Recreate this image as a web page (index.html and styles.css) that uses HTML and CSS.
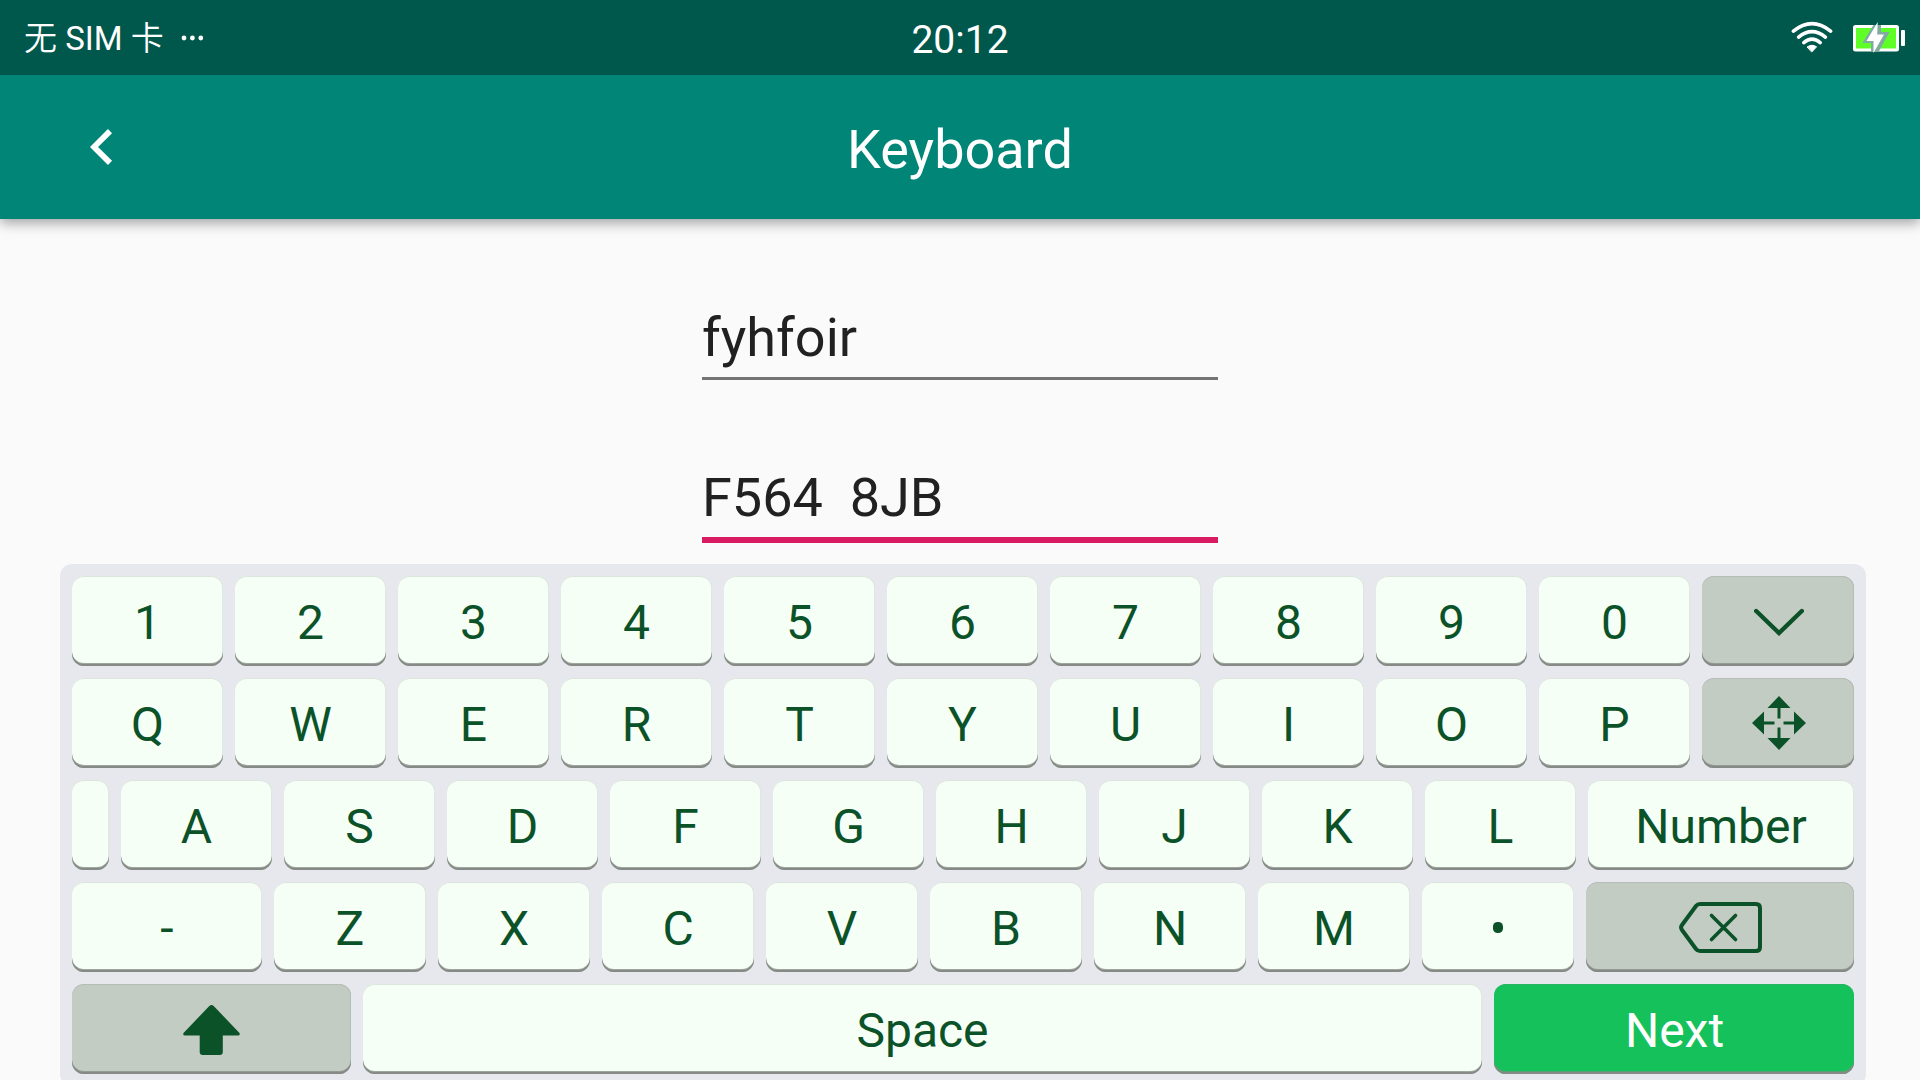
FILE: index.html
```html
<!DOCTYPE html>
<html lang="en">
<head>
<meta charset="utf-8">
<title>Keyboard</title>
<link rel="stylesheet" href="styles.css">
</head>
<body>
<div class="screen">
  <header class="status">
    <div class="carrier"><span class="carrier-name" lang="zh-CN"><span class="han">无</span> SIM <span class="han">卡</span></span>
      <svg class="more" width="24" height="8" viewBox="0 0 24 8" fill="#fff"><circle cx="4" cy="4" r="2.4"/><circle cx="12.4" cy="4" r="2.4"/><circle cx="20.8" cy="4" r="2.4"/></svg>
    </div>
    <div class="clock">20:12</div>
    <div class="indicators">
      <svg width="42" height="33" viewBox="0 0 42 33" fill="none" stroke="#fff" stroke-width="3.6" stroke-linecap="round">
        <path d="M2.4 10.200Q21 -4.800 39.600 10.200"/><path d="M7.600 16.200Q21 5.200 34.400 16.200"/><path d="M12.800 21.600Q21 14.800 29.200 21.600"/>
        <path d="M16.400 25.800Q21 22.600 25.600 25.800L21 30.800Z" fill="#fff" stroke-width="1"/>
      </svg>
      <svg width="53" height="33" viewBox="0 0 53 33">
        <rect x="1.5" y="5.5" width="43" height="23.500" rx="1" fill="#5eff26" stroke="#fff" stroke-width="3"/>
        <rect x="48" y="9" width="4" height="16" rx="1" fill="#fff"/>
        <path d="M20.500 4H28V11H36.500L25.500 31H18V22H9.500Z" fill="#80aaa2"/>
        <path d="M24.700 1L13.500 20H20.500V32L31 13.500H24.200Z" fill="#fff"/>
      </svg>
    </div>
  </header>
  <div class="appbar">
    <svg class="back" width="24" height="38" viewBox="0 0 24 38" fill="none" stroke="#fff" stroke-width="5.8"><path d="M20 3.1L4 19L20 34.9"/></svg>
    <h1 class="title">Keyboard</h1>
  </div>
  <main class="form">
    <div class="field">fyhfoir</div>
    <div class="field field-active">F564  8JB</div>
  </main>
  <section class="keyboard">
    <div class="row row-top">
      <div class="key">1</div><div class="key">2</div><div class="key">3</div><div class="key">4</div><div class="key">5</div><div class="key">6</div><div class="key">7</div><div class="key">8</div><div class="key">9</div><div class="key">0</div>
      <div class="key key-fn"><svg class="icon-hide" width="50" height="28" viewBox="0 0 50 28" fill="none" stroke="#0c5229" stroke-width="4.400" stroke-linecap="round"><path d="M2.200 3L25 25L47.800 3"/></svg></div>
    </div>
    <div class="row row-top">
      <div class="key">Q</div><div class="key">W</div><div class="key">E</div><div class="key">R</div><div class="key">T</div><div class="key">Y</div><div class="key">U</div><div class="key">I</div><div class="key">O</div><div class="key">P</div>
      <div class="key key-fn key-move"><svg class="icon-move" width="54" height="54" viewBox="0 0 54 54" fill="#0c5229"><path d="M27 0L38.500 12H28.500V22.500H25.500V12H15.500Z"/><path d="M27 54L38.500 42H28.500V31.500H25.500V42H15.500Z"/><path d="M0 27L12 15.500V25.500H22.500V28.500H12V38.500Z"/><path d="M54 27L42 15.500V25.500H31.500V28.500H42V38.500Z"/></svg></div>
    </div>
    <div class="row row-home">
      <div class="key"></div><div class="key">A</div><div class="key">S</div><div class="key">D</div><div class="key">F</div><div class="key">G</div><div class="key">H</div><div class="key">J</div><div class="key">K</div><div class="key">L</div><div class="key">Number</div>
    </div>
    <div class="row row-lower">
      <div class="key">-</div><div class="key">Z</div><div class="key">X</div><div class="key">C</div><div class="key">V</div><div class="key">B</div><div class="key">N</div><div class="key">M</div>
      <div class="key"><svg class="icon-dot" width="10" height="11" viewBox="0 0 10 11"><rect width="10" height="11" rx="4.6" fill="#0c5229"/></svg></div>
      <div class="key key-fn"><svg class="icon-delete" width="83" height="51" viewBox="0 0 83 51" fill="none" stroke="#0c5229" stroke-linecap="round" stroke-linejoin="round"><path stroke-width="4" d="M21 2H77Q81 2 81 6V45Q81 49 77 49H21Q18.500 49 17 47L3 28Q1.200 25.500 3 23L17 4Q18.500 2 21 2Z"/><path stroke-width="3.600" d="M32.500 13.500L56.500 37.500M56.500 13.500L32.500 37.500"/></svg></div>
    </div>
    <div class="row row-bottom">
      <div class="key key-fn key-shift"><svg class="icon-shift" width="57" height="50" viewBox="0 0 57 50" fill="#0c5229"><path d="M26.300 1Q28.500 -1 30.700 1L56.500 28Q57.500 30.500 55 30.500H39.800V47Q39.800 50 36.800 50H19.700Q16.700 50 16.700 47V30.500H2Q-0.500 30.500 0.500 28Z"/></svg></div>
      <div class="key">Space</div>
      <div class="key key-next">Next</div>
    </div>
  </section>
</div>
</body>
</html>
```
FILE: styles.css
```css
* { box-sizing: border-box; }
body { margin: 0; background: #fafafa; font-family: Roboto, "Noto Sans CJK SC", sans-serif; overflow: hidden; }
svg { display: block; flex: none; }
.screen { display: flex; flex-direction: column; width: 1920px; height: 1080px; overflow: hidden; background: #fafafa; }
.status { display: grid; grid-template-columns: 1fr auto 1fr; grid-template-rows: 75px; align-items: center; flex: none; height: 75px; padding: 0 14px 0 24px; background: #00574b; color: #fff; }
.carrier { display: flex; align-items: center; font-size: 33px; font-weight: 400; line-height: 75px; white-space: pre; }
.carrier-name { padding-top: 1px; }
.han { font-weight: 350; }
.more { margin-left: 16px; }
.clock { margin-right: 10px; padding-top: 6px; font-size: 39px; line-height: 75px; }
.indicators { display: flex; justify-content: flex-end; align-items: center; gap: 20px; }
.appbar { display: grid; grid-template-columns: 1fr auto 1fr; align-items: center; flex: none; height: 144px; padding-left: 90px; padding-right: 90px; background: #008577; color: #fff; box-shadow: 0 4px 12px rgba(0, 0, 0, .36); clip-path: inset(0 0 -30px 0); }
.title { margin: 0; padding-top: 5px; font-size: 54px; font-weight: 400; line-height: 64px; }
.form { display: flex; flex-direction: column; align-items: center; flex: none; gap: 77px; height: 345px; padding-top: 81px; }
.field { flex: none; width: 516px; height: 80px; padding-top: 6px; border-bottom: 3px solid #747474; color: #212121; font-size: 54px; line-height: 64px; white-space: pre; }
.field-active { height: 86px; padding-top: 9px; border-bottom: 6px solid #d81b60; }
.keyboard { display: flex; flex-direction: column; flex: none; gap: 12px; width: 1806px; height: 522px; margin-left: 60px; padding: 12px; border-radius: 12px; background: #e7e8ee; }
.row { display: grid; gap: 12px; height: 90px; }
.row-top { grid-template-columns: repeat(10, 151px) 1fr; }
.row-home { grid-template-columns: 37px repeat(9, 151px) 1fr; }
.row-lower { grid-template-columns: 190px repeat(8, 152px) 1fr; }
.row-bottom { grid-template-columns: 279px 1119px 1fr; }
.key { display: flex; align-items: center; justify-content: center; padding-top: 3px; border-radius: 12px; background: #f5fff6; color: #0c5229; font-size: 48px; line-height: 56px; box-shadow: inset 0 -2px #868a86, inset 0 -3px #9fa69f, inset 0 1px #dce4de, inset -1px 0 #dfe8e0; }
.key-fn { padding-top: 1px; padding-left: 1px; background: #c3ccc3; box-shadow: inset 0 -2px #868a86, inset 0 -3px #949b95, inset 0 1px #b5beb6, inset -1px 0 #b5beb6; }
.key-move { padding-top: 0; }
.key-shift { padding-left: 0; }
.key-next { padding-left: 1px; background: #15c15b; color: #fff; box-shadow: inset 0 -2px #868a86, inset 0 -3px #57a173, inset 0 1px #2bb562; }
.key .icon-dot { margin-top: -2px; }
```
